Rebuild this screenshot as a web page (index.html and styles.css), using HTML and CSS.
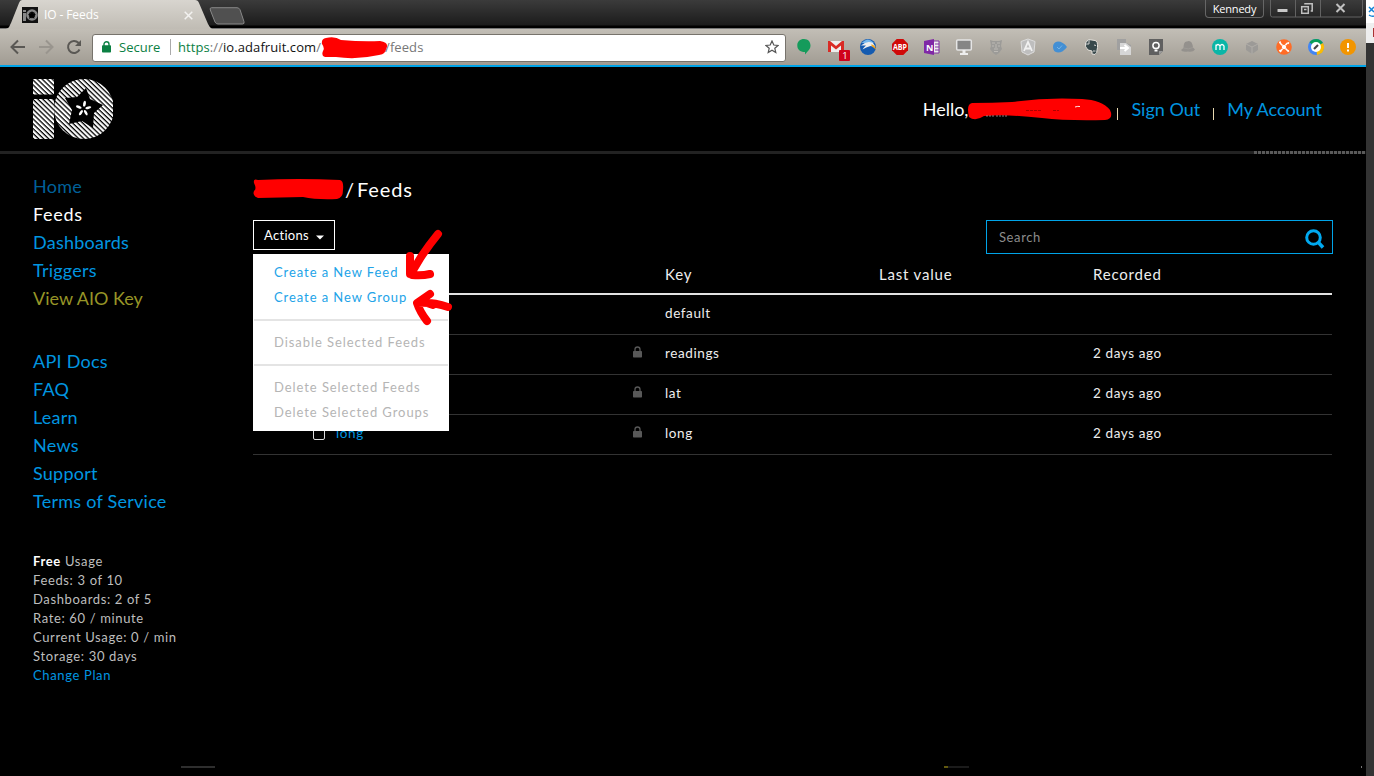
FILE: index.html
```html
<!DOCTYPE html>
<html lang="en">
<head>
<meta charset="utf-8">
<title>IO - Feeds</title>
<link rel="stylesheet" href="styles.css">
</head>
<body>
<svg width="0" height="0" class="defs">
  <defs>
    <pattern id="stripes" width="3.5" height="3.5" patternUnits="userSpaceOnUse" patternTransform="rotate(-46)">
      <rect width="2.2" height="3.5" fill="#fff"/>
    </pattern>
    <linearGradient id="tabfill" x1="0" y1="0" x2="0" y2="1"><stop offset="0" stop-color="#d8d5cf"/><stop offset="1" stop-color="#c0bcb4"/></linearGradient>
    <symbol id="iologo" viewBox="0 0 80 60">
      <path fill="url(#stripes)" d="M0 0h21v15.5H0zM0 20h21v40H0z"/>
      <circle cx="51" cy="30" r="30" fill="url(#stripes)"/>
      <path fill="#000" d="M53 9l4 11 13 6-9 8-1 15-11-7-13 3 3-14-7-12 12-1z"/>
      <g fill="#fff" transform="translate(-.7 -.3)"><ellipse cx="52.2" cy="25" rx="1.4" ry="3" transform="rotate(10 52.2 25)"/><ellipse cx="56" cy="29" rx="3" ry="1.3" transform="rotate(-12 56 29)"/><ellipse cx="53.5" cy="34" rx="1.3" ry="3" transform="rotate(-30 53.5 34)"/><ellipse cx="48.6" cy="34" rx="1.3" ry="3" transform="rotate(35 48.6 34)"/><ellipse cx="46.5" cy="28.3" rx="3" ry="1.3" transform="rotate(22 46.5 28.3)"/></g>
    </symbol>
    <symbol id="lock" viewBox="0 0 9 12"><path d="M2 5.500V3.500a2.500 2.500 0 0 1 5 0v2" fill="none" stroke="#585858" stroke-width="1.300"/><rect y="5" width="9" height="6.500" rx=".7" fill="#585858"/></symbol>
  </defs>
</svg>
<div class="screen">
<div class="window">
  <div class="tabstrip">
    <div class="tab">
      <svg class="tab-shape" width="206" height="29" viewBox="0 0 206 29"><path d="M0 29C3 28 3 27 5 23L13 3Q14 0 16 0H189Q192 0 193 3L202 24Q204 28 206 29z" fill="url(#tabfill)"/></svg>
      <svg class="favicon" width="16" height="16" viewBox="0 0 16 16"><path d="M0 0h16v16H0z" fill="#111"/><path d="M1 3h3v2H1zM1 6h3v8H1z" fill="#888"/><circle cx="10" cy="8" r="4.500" fill="none" stroke="#888" stroke-width="2.600"/><path d="M10 4l1 3h3l-2.500 2 1 3-2.500-2-3 2 1-3-2-2h3z"/></svg>
      <span class="tab-title">IO - Feeds</span>
      <svg width="9" height="9" viewBox="0 0 9 9"><path d="M.7.7l7.600 7.600M8.300.7L.7 8.300" stroke="#f3f2f0" stroke-width="1.500"/></svg>
    </div>
    <svg class="newtab" width="36" height="18" viewBox="0 0 36 18"><path d="M2.500.7H28q2 0 3 2l4 12q.6 2.300-1.500 2.300H9q-2 0-3-2L1.300 3Q.6.7 2.500.7z" fill="#505050" stroke="#888"/></svg>
    <div class="controls">
      <div class="user">Kennedy</div>
      <svg width="94" height="18" viewBox="0 0 94 18"><path d="M.5 0v15q0 2 2 2h88q2 0 2-2V0M25.500 0v17M50.500 0v17" fill="none" stroke="#626262"/><rect x="7.500" y="9" width="10" height="3" rx=".5" fill="#c8c8c8"/><g fill="none" stroke="#c0c0c0" stroke-width="1.500"><path d="M35 4.500V3.700h7.200v7.200h-1.500"/><rect x="31.700" y="6.700" width="6.600" height="6.600"/><path d="M34 9.500h2.500"/><path d="M66.500 4l8 8M74.500 4l-8 8" stroke-width="2"/></g></svg>
    </div>
  </div>
  <div class="toolbar">
    <div class="nav-icons">
      <svg width="16" height="16" viewBox="0 0 16 16"><path d="M15 8H2M8 1.500L1.500 8 8 14.500" fill="none" stroke="#5a5854" stroke-width="2"/></svg>
      <svg width="16" height="16" viewBox="0 0 16 16"><path d="M1 8h13M8 1.500L14.500 8 8 14.500" fill="none" stroke="#99958e" stroke-width="2"/></svg>
      <svg width="16" height="16" viewBox="0 0 16 16"><path d="M13.500 10.500A6 6 0 1 1 12.400 3.800L14 5.500" fill="none" stroke="#5a5854" stroke-width="2"/><path d="M15 1v6H9z" fill="#5a5854"/></svg>
    </div>
    <div class="omnibox">
      <svg width="9" height="12" viewBox="0 0 9 12"><path d="M2 5V3.200a2.500 2.500 0 0 1 5 0V5" fill="none" stroke="#0b8043" stroke-width="1.400"/><rect y="4.300" width="9" height="7.200" rx=".8" fill="#0b8043"/></svg>
      <span class="secure">Secure</span>
      <span class="sep"></span>
      <span class="url"><i>https</i>://<b>io.adafruit.com</b>/</span>
      <svg class="url-mark" width="67" height="22" viewBox="0 0 67 22"><path d="M5 1Q14-1 20 3Q42 5 59 4Q67 5 66 10Q65 17 58 18Q36 23 15 20L4 20Q0 19 2 14Q4 11 1 7Q0 2 5 1z" fill="#f00"/></svg>
      <span class="url path">/feeds</span>
      <svg class="star" width="14" height="14" viewBox="0 0 14 14"><path d="M7 1l1.800 4 4.300.4-3.300 2.900 1 4.300L7 10.300l-3.800 2.300 1-4.300L.9 5.400l4.300-.4z" fill="none" stroke="#555" stroke-width="1.200"/></svg>
    </div>
    <div class="extensions">
      <svg viewBox="0 0 16 16"><path d="M8 0C12 0 14.500 2.800 14.500 6.500 14.500 10 12 12 9 15.500V13C4 13 1.300 10.500 1.300 6.500 1.300 2.500 4 0 8 0z" fill="#159b5b"/></svg>
      <svg viewBox="0 0 16 16" class="gmail"><path d="M0 2h16v11H0z" fill="#eee"/><path d="M0 2h2l6 5 6-5h2v11h-3V6.500L8 10.500 3 6.500V13H0z" fill="#d92b25"/><rect x="11" y="11" width="11" height="11" rx="1" fill="#d0021b"/><text x="14.200" y="20" fill="#fff" font-size="9.500">1</text></svg>
      <svg viewBox="0 0 16 16"><circle cx="8" cy="8" r="8" fill="#155bb0"/><path d="M1.500 4Q8-3 14 4z" fill="#77b9ee"/><path d="M1 6.500Q7 1 13 4l2.500 4-5-1Q6 8 2.500 10.500 4 8 6 6.500z" fill="#eee"/><path d="M11 5.500q4 0 5 5l-4-3z" fill="#f3a31b"/></svg>
      <svg viewBox="0 0 16 16"><path d="M4.700 0h6.600L16 4.700v6.600L11.300 16H4.700L0 11.300V4.700z" fill="#d00909"/><text x="1" y="11" textLength="14" lengthAdjust="spacingAndGlyphs" fill="#fff" font-size="8" font-weight="bold">ABP</text></svg>
      <svg viewBox="0 0 16 16"><path d="M9 2h6v12H9z" fill="#eee" stroke="#8233a5"/><path d="M11 5h4M11 8h4M11 11h4" stroke="#8233a5"/><path d="M0 2l10-2v16L0 14z" fill="#8028a6"/><text x="2" y="11.500" fill="#fff" font-size="9" font-weight="bold">N</text></svg>
      <svg viewBox="0 0 16 16"><rect x=".7" y="1" width="14.600" height="10" rx="1" fill="#858585" stroke="#e5e5e5" stroke-width="1.500"/><path d="M6.500 11h3v3H12v2H4v-2h2.500z" fill="#eee"/></svg>
      <svg viewBox="0 0 16 16"><path d="M2 1l3 1h6l3-1-1 6 1 3-3 4-3 2-3-2-3-4 1-3z" fill="#9c9b98"/><path d="M4 4h3M9 4h3M4 7h2M10 7h2M6 10h4M6 12.500h4M8 5v4" stroke="#bcb9b4"/></svg>
      <svg viewBox="0 0 16 16"><path d="M8 0l7 2.500L14 13l-6 3-6-3L1 2.500z" fill="#bebebe" stroke="#ddd"/><path d="M4 12l4-9 4 9M5.500 9.500h5" fill="none" stroke="#f1f1f1" stroke-width="1.800"/></svg>
      <svg viewBox="0 0 16 16"><path d="M1 8q0-5 5-5.500 5 0 9 5.500-4 5.500-9 5.500Q1 13 1 8z" fill="#438fd4"/><path d="M5 8l2 2 3-3.500" fill="none" stroke="#75b4e8"/></svg>
      <svg viewBox="0 0 16 16"><path d="M1.500 4l3-3.500L11 1.500q3 .5 2.500 7T11 15.500l-3-.5v-3l-4-1Q.5 8 1.500 4z" fill="#37484b" stroke="#e5e2dc"/><path d="M5 1v4H1M10 6l2 .5M9 12h2.500" fill="none" stroke="#d3d3d3"/></svg>
      <svg viewBox="0 0 16 16"><path d="M1 0h9v4l5 2v10H4v-5H1z" fill="#a0a0a0"/><path d="M4 4h6l5 4v8H4z" fill="#d6d6d6"/><path d="M4 9h7M8.500 6L12 9l-3.500 3" fill="none" stroke="#fff" stroke-width="2"/></svg>
      <svg viewBox="0 0 16 16"><path d="M1 0h14v12l-4 4H1z" fill="#606060"/><path d="M11 12h4l-4 4z" fill="#999"/><circle cx="8" cy="6.500" r="3.100" fill="none" stroke="#fff" stroke-width="1.500"/><path d="M6.500 10.500h3v2h-3z" fill="#fff"/></svg>
      <svg viewBox="0 0 16 16"><path d="M3.500 9q0-7 3.500-6.500 5-2 6 6l2 2q-2 3-7 2-6 1-7-1.500z" fill="#94918d"/><path d="M3.500 9q5 2 9.500-.5" fill="none" stroke="#9e9b96"/></svg>
      <svg viewBox="0 0 16 16"><circle cx="8" cy="8" r="8" fill="#0ab6a7"/><path d="M4 11V5.500M4 7q2-3 4 0v4M8 7q2-3 4 0v4" fill="none" stroke="#fff" stroke-width="1.300"/></svg>
      <svg viewBox="0 0 16 16"><path d="M8 2l6 3v6l-6 4-6-4V5z" fill="#9c9a97"/><path d="M2 5l6 3 6-3M8 8v7" fill="none" stroke="#b0ada8"/></svg>
      <svg viewBox="0 0 16 16"><circle cx="8" cy="8" r="7.800" fill="#ff6c26"/><path d="M4 4l2.500 2.500M11.500 4L9.500 6M4.500 12l2-2M12 12l-2.500-2.500" stroke="#fff" stroke-width="1.600"/><path d="M3 3.500l2-.5M11.500 3.500l1.500 1M3.500 11l1.500 1.800M11.500 12.500l1.500-1" stroke="#fff" stroke-width="1.800"/><circle cx="8" cy="8" r="2.200" fill="#fff"/></svg>
      <svg viewBox="0 0 16 16"><circle cx="8" cy="8" r="8" fill="#4285f4"/><path d="M8 8L1.500 3.400A8 8 0 0 1 15 4z" fill="#0a9f5a"/><path d="M8 8l7-4a8 8 0 0 1-6 12z" fill="#fbbc05"/><circle cx="8" cy="8" r="5" fill="#fff"/><path d="M6 10l4-4" stroke="#444" stroke-width="2.200"/></svg>
      <svg viewBox="0 0 16 16"><circle cx="8" cy="8" r="8" fill="#f29500"/><path d="M8 4v5M8 10.500v2" stroke="#fff" stroke-width="2"/></svg>
    </div>
  </div>
  <div class="page">
    <header>
      <svg class="logo" width="80" height="60"><use href="#iologo"/></svg>
      <div class="account">
        <span class="hello">Hello,</span>
        <svg class="name-mark" width="145" height="24" viewBox="0 0 145 24"><path d="M5 5Q25 5 45 4Q80-1 115 1Q135 2 143 12Q147 21 138 22Q100 23 75 20Q40 16 17 18Q8 24 2 19Q-1 6 5 5z" fill="#f00"/><path d="M19 18h8M29 18h11" stroke="#ccc" stroke-width=".6" stroke-dasharray="2 1"/><path d="M59 12.500h15M86 12.500h6" stroke="#9b0000" stroke-width=".8" stroke-dasharray="3 1"/><path d="M108 9q3-1 5-.5" fill="none" stroke="#fff" stroke-width=".9"/></svg>
        <span class="bar"></span>
        <a class="signout">Sign Out</a>
        <span class="bar second"></span>
        <a class="myaccount">My Account</a>
      </div>
    </header>
    <div class="rule"><span></span></div>
    <div class="columns">
      <aside>
        <nav class="main-nav">
          <a class="dim">Home</a><a class="active">Feeds</a><a>Dashboards</a><a>Triggers</a><a class="key">View AIO Key</a>
        </nav>
        <nav class="docs-nav">
          <a>API Docs</a><a>FAQ</a><a>Learn</a><a>News</a><a>Support</a><a>Terms of Service</a>
        </nav>
        <div class="usage">
          <div><b>Free</b> Usage</div><div>Feeds: 3 of 10</div><div>Dashboards: 2 of 5</div><div>Rate: 60 / minute</div><div>Current Usage: 0 / min</div><div>Storage: 30 days</div><a>Change Plan</a>
        </div>
      </aside>
      <main>
        <h1><svg width="92" height="22" viewBox="0 0 92 22"><path d="M5 2Q45 0 87 2Q91 3 90 12Q90 20 84 21Q64 22 50 19L5 20Q-1 18 1 13Q4 11 1 5Q0 0 5 2z" fill="#f00"/></svg><span class="slash">/</span><span>Feeds</span></h1>
        <div class="tools">
          <div class="actions">
            <button>Actions<svg width="8" height="5" viewBox="0 0 8 5"><path d="M0 .5h8L4 4.500z" fill="#fff"/></svg></button>
            <div class="menu">
              <a>Create a New Feed</a><a class="group">Create a New Group</a><hr>
              <a class="off">Disable Selected Feeds</a><hr>
              <a class="off">Delete Selected Feeds</a><a class="off">Delete Selected Groups</a>
              <svg class="arrows" width="50" height="98" viewBox="0 0 50 98"><g fill="none" stroke="#f00" stroke-width="8" stroke-linecap="round" stroke-linejoin="round"><path d="M34 6Q25 17 17 29L8 44M6 28v18M8 47q10 1 18-1"/><path d="M26 66L13 75q3 9 10 18M14 75q15-1 30 4M17 73l12 4"/></g></svg>
            </div>
          </div>
          <div class="search"><span>Search</span><svg width="20" height="20" viewBox="0 0 20 20"><circle cx="8.500" cy="8.500" r="6.800" fill="none" stroke="#00a9f0" stroke-width="3"/><path d="M13 13l5 5.500" stroke="#00a9f0" stroke-width="3.500"/></svg></div>
        </div>
        <div class="table">
          <div class="row head"><span></span><span></span><span>Key</span><span>Last value</span><span>Recorded</span></div>
          <div class="row"><span></span><span></span><span>default</span><span></span><span></span></div>
          <div class="row"><span></span><svg width="9" height="12"><use href="#lock"/></svg><span>readings</span><span></span><span>2 days ago</span></div>
          <div class="row"><span></span><svg width="9" height="12"><use href="#lock"/></svg><span>lat</span><span></span><span>2 days ago</span></div>
          <div class="row"><span class="feed"><i></i><a>long</a></span><svg width="9" height="12"><use href="#lock"/></svg><span>long</span><span></span><span>2 days ago</span></div>
        </div>
      </main>
    </div>
    <footer><span class="f1"></span><span class="f2"></span><span class="f3"></span></footer>
  </div>
</div>
<div class="edge">
  <div class="edge-top"><svg width="8" height="23" viewBox="0 0 8 23"><path d="M3 7l5 5M8 7l-5 5M3 15q3 2 5 1" fill="none" stroke="#1583d7" stroke-width="1.500"/></svg></div>
  <div class="edge-bar"><i></i></div>
</div>
</div>
</body>
</html>
```
FILE: styles.css
```css
* { box-sizing: border-box; }
body { margin: 0; background: #333; font-family: Lato, "Liberation Sans", sans-serif; overflow: hidden; }
.defs { position: absolute; }
svg { display: block; flex: none; }
.screen { display: flex; width: 1374px; height: 776px; }
.window { width: 1366px; display: flex; flex-direction: column; background: #000; }
.edge { width: 8px; background: #333; }
.edge-top { height: 23px; background: #fff; }
.edge-bar { height: 20px; background: #eee; padding: 5px 0 0 7px; }
.edge-bar i { display: block; width: 1px; height: 9px; background: #a33; }

.tabstrip { height: 29px; display: flex; align-items: flex-start; background: linear-gradient(#3b3b3b, #1c1c1c 25px, #000 26px, #000 28px, #777 28px); font-family: "Open Sans", sans-serif; }
.tab { position: relative; width: 206px; height: 29px; margin-left: 6px; padding: 1px 13px 0 16px; display: flex; align-items: center; }
.tab-shape { position: absolute; left: 0; top: 0; }
.favicon, .tab-title, .tab svg { position: relative; }
.tab .tab-shape { position: absolute; }
.tab-title { color: #fff; font-size: 12px; margin-left: 6px; width: 140px; letter-spacing: -.1px; padding-bottom: 1px; }
.newtab { margin: 7px 0 0 -3px; }
.controls { display: flex; margin-left: auto; padding-right: 2px; gap: 6px; }
.user { width: 59px; height: 18px; border: 1px solid #666; border-top: 0; border-radius: 0 0 4px 4px; color: #fff; font-size: 11px; letter-spacing: -.2px; line-height: 18px; text-align: center; }

.toolbar { height: 38px; display: flex; align-items: center; padding: 0 10px; background: linear-gradient(#c2beb6, #a19c93 36px, #00a4e8 36px); font-family: "Open Sans", sans-serif; }
.nav-icons { display: flex; gap: 12px; width: 82px; padding-bottom: 2px; }
.omnibox { width: 694px; height: 28px; margin-bottom: 1px; border: 1px solid #77736c; border-radius: 3px; background: #fff; display: flex; align-items: center; padding: 0 6px 1px 9px; font-size: 13px; }
.secure { color: #0b8043; margin-left: 8px; width: 51px; }
.sep { width: 1px; height: 16px; background: #aaa; margin-right: 7px; }
.url { color: #777; white-space: nowrap; letter-spacing: .08px; }
.url i { font-style: normal; color: #0b8043; }
.url b { font-weight: 400; color: #111; }
.path { margin-left: -3px; }
.url-mark { margin-top: 1px; }
.star { margin-left: auto; }
.extensions { display: flex; gap: 16px; margin-left: 10px; padding-bottom: 2px; }
.extensions svg { width: 16px; height: 16px; overflow: visible; }

.page { flex: 1; display: flex; flex-direction: column; }
header { height: 84px; display: flex; justify-content: space-between; padding: 12px 44px 0 33px; }
.account { display: flex; align-items: center; height: 62px; font-size: 18px; color: #fff; }
.hello, .account a { padding-bottom: 2px; }
a { color: #0096e0; white-space: nowrap; }
.name-mark { margin: 0 4px 0 -1px; }
.bar { width: 1px; height: 12px; background: #e8d9b0; margin: 8px 13px 0 1px; }
.second { margin-left: 13px; }
.rule { height: 3px; background: #222; display: flex; justify-content: flex-end; }
.rule span { width: 112px; background: repeating-linear-gradient(90deg, #5a5a5a 0 3px, #111 3px 4px); }
.columns { display: flex; height: 596px; }
aside { width: 253px; padding: 18px 0 0 33px; }
nav a { display: block; font-size: 18px; line-height: 28px; letter-spacing: .25px; }
.docs-nav { margin-top: 35px; }
.dim { color: #00609a; }
.active { color: #fff; letter-spacing: .7px; }
.key { color: #979527; letter-spacing: 0; }
.usage { margin-top: 37px; font-size: 13px; line-height: 19px; color: #bebebe; letter-spacing: .64px; }
.usage b { color: #fff; }
main { width: 1080px; padding-top: 24px; }
h1 { margin: 0; height: 42px; display: flex; align-items: flex-start; font-weight: 400; font-size: 20px; line-height: 22px; letter-spacing: .9px; color: #fff; }
.slash { width: 12px; }
.tools { display: flex; justify-content: space-between; height: 34px; }
.actions { position: relative; }
button { width: 82px; height: 30px; border: 1px solid #fff; background: #000; color: #fff; font: 13px Lato, sans-serif; letter-spacing: .3px; padding: 0 10px; display: flex; align-items: center; justify-content: space-between; }
button svg { margin-top: 4px; }
.menu { position: absolute; z-index: 2; left: 0; top: 34px; width: 196px; height: 177px; padding: 6px 1px; background: #fff; }
.menu a { display: block; padding-left: 20px; font-size: 13px; line-height: 25px; letter-spacing: .93px; color: #22a3e8; }
.menu .off { color: #b5b5b5; }
hr { margin: 9px 0; height: 2px; border: 0; background: #e4e4e4; }
.arrows { position: absolute; left: 151px; top: -26px; overflow: visible; }
.search { width: 347px; height: 34px; border: 1px solid #00a4e8; display: flex; align-items: center; justify-content: space-between; padding: 0 7px 0 12px; font-size: 13px; color: #8c8c8c; letter-spacing: .6px; }
.search svg { margin-top: 3px; }
.table { width: 1079px; }
.row { height: 40px; border-bottom: 1px solid #333; display: grid; grid-template-columns: 380px 32px 214px 214px 1fr; align-items: center; font-size: 13.5px; letter-spacing: .6px; color: #eee; padding-bottom: 4px; }
.row svg { margin-bottom: 1px; }
.head { height: 41px; border-bottom: 2px solid #e2e2e2; font-size: 15px; letter-spacing: .8px; padding-bottom: 0; }
.feed { padding-left: 60px; display: flex; align-items: center; gap: 11px; }
.feed i { width: 12px; height: 12px; margin-top: 2px; border: 1px solid #ddd; border-radius: 2px; }
footer { height: 26px; display: flex; padding: 16px 4px 0 181px; }
footer span { height: 2px; }
.f1 { width: 34px; background: #2e2e2e; }
.f2 { width: 25px; margin-left: 729px; background: linear-gradient(90deg, #61590f 4px, #1b1b1b 4px); }
.f3 { width: 1px; margin-left: auto; background: #777; }
```
